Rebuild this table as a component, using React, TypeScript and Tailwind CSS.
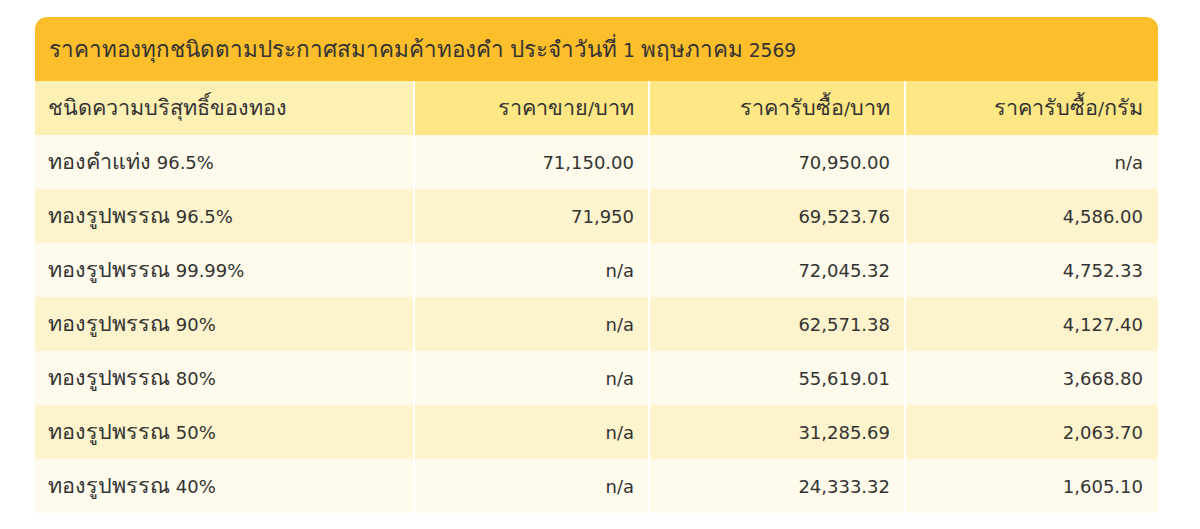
import React from "react";

const rows = [
  ["ทองคำแท่ง 96.5%", "71,150.00", "70,950.00", "n/a"],
  ["ทองรูปพรรณ 96.5%", "71,950", "69,523.76", "4,586.00"],
  ["ทองรูปพรรณ 99.99%", "n/a", "72,045.32", "4,752.33"],
  ["ทองรูปพรรณ 90%", "n/a", "62,571.38", "4,127.40"],
  ["ทองรูปพรรณ 80%", "n/a", "55,619.01", "3,668.80"],
  ["ทองรูปพรรณ 50%", "n/a", "31,285.69", "2,063.70"],
  ["ทองรูปพรรณ 40%", "n/a", "24,333.32", "1,605.10"],
];

// Thai glyphs come from a smaller fallback font, so bump them up a bit
function T({ children }: { children: string }) {
  const parts = children.split(/([\u0E00-\u0E7F]+)/);
  return (
    <span className="leading-none">
      {parts.map((p, i) =>
        /[\u0E00-\u0E7F]/.test(p) ? (
          <span key={i} className="text-[1.2em] leading-none">
            {p}
          </span>
        ) : (
          <span key={i}>{p}</span>
        )
      )}
    </span>
  );
}

export default function App() {
  return (
    <div className="w-[1200px] h-[529px] bg-white pt-[17px] pl-[35px] font-['DejaVu_Sans',sans-serif] text-[#333]">
      <div className="w-[1123px]">
        {/* Title */}
        <div className="h-[64px] rounded-t-[12px] bg-[#fcbe2a] flex items-center px-[14px] text-[18.7px]">
          <T>ราคาทองทุกชนิดตามประกาศสมาคมค้าทองคำ ประจำวันที่ 1 พฤษภาคม 2569</T>
        </div>

        <div className="grid grid-cols-[378px_233px_254px_252px] gap-x-[2px] text-[18px]">
          {/* Header row */}
          <div className="h-[54px] bg-[#fdf0b5] flex items-center px-[13px]"><T>ชนิดความบริสุทธิ์ของทอง</T></div>
          <div className="h-[54px] bg-[#fee784] flex items-center justify-end px-[14px]"><T>ราคาขาย/บาท</T></div>
          <div className="h-[54px] bg-[#fee784] flex items-center justify-end px-[14px]"><T>ราคารับซื้อ/บาท</T></div>
          <div className="h-[54px] bg-[#fee784] flex items-center justify-end px-[15px]"><T>ราคารับซื้อ/กรัม</T></div>

          {rows.map((r, i) => {
            const bg = i % 2 === 0 ? "bg-[#fffbec]" : "bg-[#fdf3cc]";
            return (
              <React.Fragment key={i}>
                <div className={`h-[54px] ${bg} flex items-center px-[13px]`}><T>{r[0]}</T></div>
                <div className={`h-[54px] ${bg} flex items-center justify-end px-[14px]`}>{r[1]}</div>
                <div className={`h-[54px] ${bg} flex items-center justify-end px-[14px]`}>{r[2]}</div>
                <div className={`h-[54px] ${bg} flex items-center justify-end px-[15px]`}>{r[3]}</div>
              </React.Fragment>
            );
          })}
        </div>
      </div>
    </div>
  );
}
